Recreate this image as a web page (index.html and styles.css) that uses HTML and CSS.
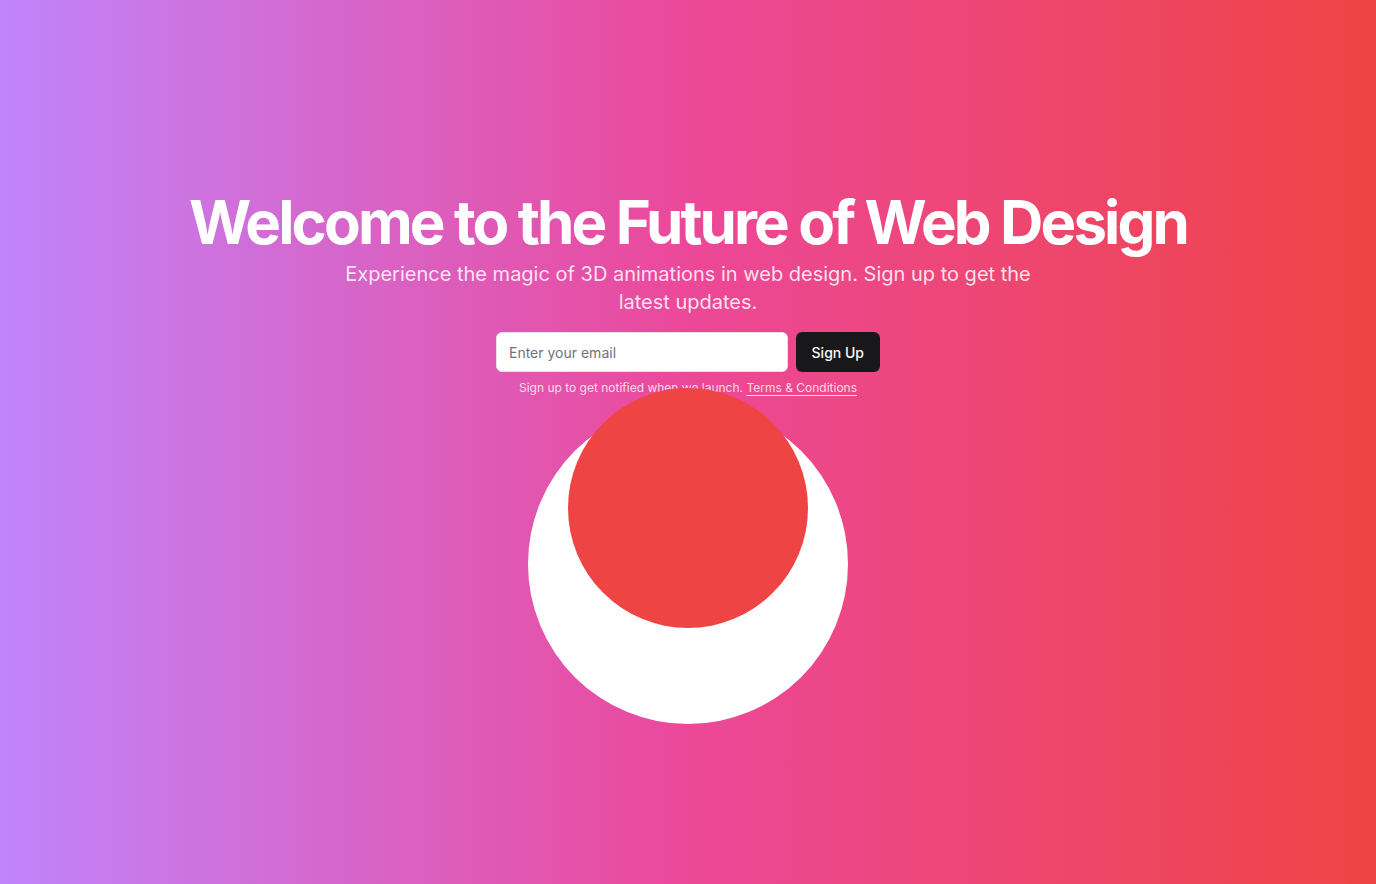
FILE: index.html
```html
<!DOCTYPE html>
<html lang="en">
<head>
<meta charset="utf-8">
<title>Welcome</title>
<link rel="stylesheet" href="styles.css">
</head>
<body>
<main class="hero">
  <div class="content">
    <h1 class="title">Welcome to the Future of Web Design</h1>
    <p class="lead">Experience the magic of 3D animations in web design. Sign up to get the latest updates.</p>
    <form class="signup">
      <input class="email" type="email" placeholder="Enter your email">
      <button class="btn" type="button">Sign Up</button>
    </form>
    <p class="note">Sign up to get notified when we launch. <a href="#" class="terms">Terms &amp; Conditions</a></p>
  </div>
  <div class="scene">
    <div class="circle-white"></div>
    <div class="circle-red"></div>
  </div>
</main>
</body>
</html>
```
FILE: styles.css
```css
* { box-sizing: border-box; }
html, body { margin: 0; padding: 0; }
body {
  font-family: Inter, "Noto Sans", sans-serif;
  color: #fff;
}
.hero {
  width: 100%;
  height: 884px;
  background: linear-gradient(to right, #c084fc, #ec4899, #ef4444);
  display: flex;
  flex-direction: column;
  align-items: center;
  padding-top: 186px;
  overflow: hidden;
}
.content {
  display: flex;
  flex-direction: column;
  align-items: center;
  text-align: center;
}
.title {
  margin: 0;
  font-size: 60px;
  line-height: 72px;
  font-weight: 700;
  letter-spacing: -0.048em;
}
.lead {
  margin: 2px 0 0;
  max-width: 700px;
  font-size: 20px;
  line-height: 28px;
  color: rgba(255,255,255,0.85);
}
.signup {
  margin-top: 16px;
  display: flex;
  gap: 8px;
  width: 384px;
}
.email {
  flex: 1;
  height: 40px;
  border: 1px solid #e4e4e7;
  border-radius: 6px;
  padding: 8px 12px;
  font-family: inherit;
  font-size: 14px;
  background: #fff;
  color: #18181b;
}
.email::placeholder { color: #71717a; }
.btn {
  height: 40px;
  padding: 0 16px;
  border: none;
  border-radius: 6px;
  background: #18181b;
  color: #fafafa;
  font-family: inherit;
  font-size: 14px;
  font-weight: 500;
}
.note {
  margin: 8px 0 0;
  font-size: 12px;
  line-height: 16px;
  color: rgba(255,255,255,0.8);
}
.terms {
  color: inherit;
  text-decoration: underline;
  text-underline-offset: 3px;
}
.scene {
  position: relative;
  margin-top: 8px;
  width: 320px;
  height: 320px;
}
.circle-white {
  width: 320px;
  height: 320px;
  border-radius: 50%;
  background: #fff;
}
.circle-red {
  position: absolute;
  top: -16px;
  left: 40px;
  width: 240px;
  height: 240px;
  border-radius: 50%;
  background: #ef4444;
}
```
